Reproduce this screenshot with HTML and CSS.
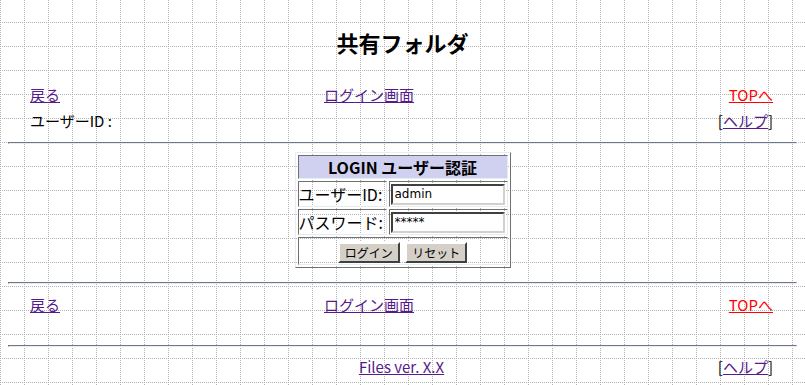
FILE: index.html
```html
<!DOCTYPE html>
<html lang="ja">
<head>
    <meta charset="UTF-8">
    <title>共有フォルダ</title>
    <link rel="stylesheet" href="styles.css">
</head>
<body>
    <h1 class="title">共有フォルダ</h1>

    <div class="nav">
        <a href="#" class="link">戻る</a>
        <a href="#" class="link">ログイン画面</a>
        <a href="#" class="link link-top">TOPへ</a>
    </div>
    <div class="info">
        <span>ユーザーID :</span>
        <span class="help">[<a href="#" class="link">ヘルプ</a>]</span>
    </div>

    <hr class="rule">

    <form class="login" id="loginForm">
        <table class="login-table">
            <tr>
                <th colspan="2">LOGIN ユーザー認証</th>
            </tr>
            <tr>
                <td class="label">ユーザーID:</td>
                <td><input type="text" id="userId" value="admin"></td>
            </tr>
            <tr>
                <td class="label">パスワード:</td>
                <td><input type="text" id="password" value="*****"></td>
            </tr>
            <tr>
                <td colspan="2" class="buttons">
                    <button type="submit">ログイン</button>
                    <button type="reset">リセット</button>
                </td>
            </tr>
        </table>
    </form>

    <hr class="rule rule-low">

    <div class="nav">
        <a href="#" class="link">戻る</a>
        <a href="#" class="link">ログイン画面</a>
        <a href="#" class="link link-top">TOPへ</a>
    </div>

    <hr class="rule rule-foot">

    <div class="footer">
        <span></span>
        <a href="#" class="link">Files ver. X.X</a>
        <span class="help">[<a href="#" class="link">ヘルプ</a>]</span>
    </div>
</body>
</html>
```

FILE: styles.css
```css
html {
    background-color: #fff;
    background-image: url("data:image/svg+xml,%3Csvg xmlns='http://www.w3.org/2000/svg' width='24' height='24' shape-rendering='crispEdges'%3E%3Cpath d='M0.5 0V24M0 0.5H24' stroke='%23b4b4b4' stroke-width='1' stroke-dasharray='1 1'/%3E%3C/svg%3E");
    background-position: 0 22px;
}

body {
    margin: 0 8px;
    padding-top: 1px;
    font-family: "Noto Sans CJK JP", "DejaVu Sans", sans-serif;
    font-size: 15px;
    color: #000;
}

.title {
    margin: 26px 0 0;
    font-size: 22px;
    line-height: 30px;
    text-align: center;
}

.link {
    color: #551a8b;
}

.link-top {
    color: #ff0000;
}

.nav,
.info,
.footer {
    height: 26px;
    line-height: 26px;
    padding: 0 24px 0 22px;
}

.nav {
    display: grid;
    grid-template-columns: 294px auto 1fr;
    margin-top: 25px;
}

.nav .link-top {
    justify-self: end;
}

.info {
    display: flex;
    justify-content: space-between;
}

.footer {
    display: grid;
    grid-template-columns: 1fr auto 1fr;
    margin-top: 7px;
}

.help {
    justify-self: end;
}

.rule {
    height: 0;
    margin: 8px 0 0;
    border: 1px solid;
    border-color: #6e7787 #e8ebf0 #e8ebf0 #6e7787;
}

.rule-low {
    margin-top: 14px;
}

.rule + .nav {
    margin-top: 8px;
}

.rule-foot {
    margin-top: 27px;
}

.login {
    margin: 8px 0 0;
    display: flex;
    justify-content: center;
}

.login-table {
    width: 216px;
    border-collapse: separate;
    border-spacing: 2px;
    border: 1px solid;
    border-color: #e4ecf4 #707070 #707070 #e4ecf4;
}

.login-table th,
.login-table td {
    padding: 0;
    border: 1px solid;
    border-color: #707070 #e4ecf4 #e4ecf4 #707070;
}

.login-table th {
    height: 22px;
    background-color: #d0d0f0;
    font-size: 16px;
    line-height: 22px;
}

.label {
    width: 87px;
    height: 23px;
    font-size: 16px;
    white-space: nowrap;
}

input[type="text"] {
    display: block;
    width: 114px;
    height: 21px;
    margin: 0 1px;
    padding: 0 2px;
    box-sizing: border-box;
    border: 2px solid;
    border-color: #404040 #d4d0c8 #d4d0c8 #404040;
    font-family: "DejaVu Sans", sans-serif;
    font-size: 12px;
}

.buttons {
    height: 26px;
    text-align: center;
}

button {
    height: 21px;
    padding: 0 5px;
    margin: 0 1px;
    background-color: #d4d0c8;
    border: 2px solid;
    border-color: #fff #404040 #404040 #fff;
    font-family: "Noto Sans CJK JP", sans-serif;
    font-size: 12px;
    line-height: 17px;
    vertical-align: middle;
}
```
